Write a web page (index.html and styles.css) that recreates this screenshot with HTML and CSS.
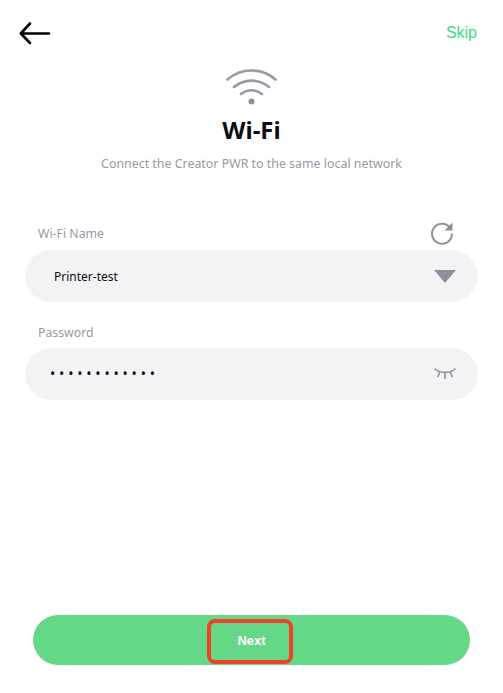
FILE: index.html
```html
<!DOCTYPE html>
<html lang="en">
<head>
<meta charset="utf-8">
<title>Wi-Fi</title>
<link rel="stylesheet" href="styles.css">
</head>
<body>
<main class="page">
  <header class="topbar">
    <svg class="back" width="32" height="24" viewBox="0 0 32 24" aria-hidden="true"><path d="M30 12.500H2.500M11 2.500L1.800 12.500L11 22" fill="none" stroke="#000" stroke-width="2.600" stroke-linecap="round" stroke-linejoin="round"/></svg>
    <span class="skip">Skip</span>
  </header>
  <section class="hero">
    <svg class="wifi" width="52" height="38" viewBox="0 0 52 38" aria-hidden="true"><g fill="none" stroke="#9a99a6" stroke-width="2.600" stroke-linecap="round"><path d="M1.500 11.500C15 -0.500 36 -0.500 49.500 11.500"/><path d="M8 19C18.500 10.500 32.500 10.500 43 19"/><path d="M15 26C21.500 21 29.500 21 36 26"/></g><circle cx="25.500" cy="33.500" r="3" fill="#8f8e9b"/></svg>
    <h1 class="title">Wi-Fi</h1>
    <p class="subtitle">Connect the Creator PWR to the same local network</p>
  </section>
  <form class="form">
    <div class="label-row">
      <span class="label">Wi-Fi Name</span>
      <svg class="refresh" width="24" height="24" viewBox="0 0 24 24" aria-hidden="true"><path d="M19.800 6.500A10 10 0 1 0 22 12.500" fill="none" stroke="#8f8e9b" stroke-width="2"/><path d="M22.500 1.500V9.500H14.500Z" fill="#8f8e9b"/></svg>
    </div>
    <div class="field">
      <span class="value">Printer-test</span>
      <svg width="22" height="13" viewBox="0 0 22 13" aria-hidden="true"><path d="M0 0H22L11 13Z" fill="#8f8e9b"/></svg>
    </div>
    <div class="label-row second">
      <span class="label">Password</span>
    </div>
    <div class="field">
      <span class="dots">••••••••••••</span>
      <svg class="eye" width="22" height="11" viewBox="0 0 22 11" aria-hidden="true"><g fill="none" stroke="#8f8e9b" stroke-width="1.600" stroke-linecap="round"><path d="M1 1C6 5.500 16 5.500 21 1"/><path d="M5.500 4.500L4 8.500M11 5.500V10.500M16.500 4.500L18 8.500"/></g></svg>
    </div>
  </form>
  <footer class="actions">
    <button class="next" type="button"><span class="next-label">Next</span></button>
  </footer>
</main>
</body>
</html>
```
FILE: styles.css
```css
*, *::after { box-sizing: border-box; }
html, body { margin: 0; height: 100%; background: #fff; }
.page {
  width: 503px;
  height: 693px;
  display: flex;
  flex-direction: column;
  overflow: hidden;
  font-family: "Noto Sans", "Open Sans", sans-serif;
}
.topbar {
  display: flex;
  justify-content: space-between;
  align-items: center;
  height: 24px;
  margin-top: 21px;
  padding: 0 26px 0 19px;
}
.back { display: block; }
.skip {
  font-family: "Liberation Sans", sans-serif;
  font-size: 16px;
  color: #3ddb7c;
}
.hero {
  display: flex;
  flex-direction: column;
  align-items: center;
  margin-top: 23px;
}
.wifi { display: block; }
.title {
  margin: 7px 0 0;
  height: 34px;
  font-size: 24px;
  line-height: 34px;
  font-weight: 700;
  color: #0c0c14;
}
.subtitle {
  margin: 8px 0 0;
  font-size: 12.400px;
  line-height: 18px;
  color: #9a99a6;
}
.form {
  display: flex;
  flex-direction: column;
  margin-top: 45px;
  padding: 0 25px;
}
.label-row {
  display: flex;
  justify-content: space-between;
  align-items: center;
  height: 30px;
  padding: 0 24px 0 13px;
  margin-bottom: 2px;
}
.label-row.second {
  height: 19px;
  margin-top: 21px;
  margin-bottom: 6px;
}
.label { font-size: 12.300px; color: #9a99a6; }
.refresh { display: block; }
.field {
  display: flex;
  justify-content: space-between;
  align-items: center;
  height: 52px;
  padding: 0 22px 0 29px;
  border-radius: 26px;
  background: #f3f3f5;
}
.value { font-size: 12px; color: #0c0c14; }
.dots {
  padding-bottom: 2px;
  font-size: 14px;
  letter-spacing: 3.800px;
  margin-left: -4px;
  color: #0c0c14;
}
.eye { margin-bottom: 2px; }
.actions {
  margin-top: auto;
  padding: 0 33px 28px;
}
.next {
  position: relative;
  display: block;
  width: 437px;
  height: 50px;
  border: 0;
  border-radius: 25px;
  background: #64d887;
  color: #fff;
  font-family: "Liberation Sans", sans-serif;
  font-size: 13px;
  font-weight: 700;
}
.next::after {
  content: "";
  position: absolute;
  left: 174px;
  top: 4px;
  width: 86px;
  height: 45px;
  border: 4px solid #ee4126;
  border-radius: 8px;
}
```
